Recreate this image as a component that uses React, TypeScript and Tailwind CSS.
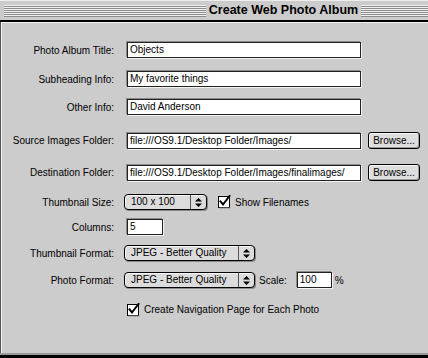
import React from "react";

function Field({ value, className }: { value: string; className: string }) {
  return (
    <div
      className={`h-[16px] overflow-hidden whitespace-nowrap border border-[#222] bg-white pl-[2px] text-[10px] leading-[14px] text-black shadow-[-1px_-1px_0_#8a8a8a,1px_1px_0_#f4f4f4] ${className}`}
    >
      {value}
    </div>
  );
}

function Arrows() {
  return (
    <svg width="7" height="9" viewBox="0 0 7 9">
      <path d="M3.5 0 L7 3.5 L0 3.5 Z" fill="#000" />
      <path d="M0 5.5 L7 5.5 L3.5 9 Z" fill="#000" />
    </svg>
  );
}

function Popup({ value, className }: { value: string; className: string }) {
  return (
    <div
      className={`flex h-[16px] items-stretch rounded-[4px] border border-black bg-[#dcdcdc] shadow-[1px_1px_0_#8a8a8a,inset_1px_1px_0_#f6f6f6] ${className}`}
    >
      <div className="flex-1 whitespace-nowrap pl-[6px] text-[10px] leading-[14px] text-black">
        {value}
      </div>
      <div className="w-px bg-[#555]" />
      <div className="flex w-[15px] items-center justify-center">
        <Arrows />
      </div>
    </div>
  );
}

function Checkbox() {
  return (
    <svg width="14" height="14" viewBox="0 0 14 14" className="shrink-0">
      <rect x="0.5" y="1.5" width="11" height="11" fill="#fff" stroke="#000" />
      <rect x="1.5" y="12.5" width="11" height="1" fill="#8a8a8a" />
      <path
        d="M2.5 6.5 L5 9.5 L11.5 1"
        fill="none"
        stroke="#000"
        strokeWidth="2"
        strokeLinecap="square"
      />
    </svg>
  );
}

function Browse() {
  return (
    <div className="ml-[7px] flex h-[17px] w-[52px] items-center justify-center rounded-[3px] border border-black bg-[#dedede] text-[10px] text-black shadow-[inset_1px_1px_0_#fafafa,inset_-1px_-1px_0_#999]">
      Browse...
    </div>
  );
}

function Label({ children }: { children: React.ReactNode }) {
  return (
    <div className="w-[113px] shrink-0 whitespace-nowrap text-right text-[10px] text-black">
      {children}
    </div>
  );
}

const stripes =
  "h-[12px] bg-[image:repeating-linear-gradient(to_bottom,#f2f2f2_0px,#f2f2f2_1px,#8c8c8c_1px,#8c8c8c_2px)]";

export default function App() {
  return (
    <div className="flex h-[358px] w-[428px] flex-col overflow-hidden bg-[#cccccc] font-['Liberation_Sans',Arial,sans-serif]">
      <div className="flex h-[20px] shrink-0 items-center border-t border-[#eeeeee] bg-[#cccccc]">
        <div className={`ml-[4px] w-[202px] ${stripes}`} />
        <div className="w-[155px] shrink-0 whitespace-nowrap text-center text-[12.5px] font-bold leading-none text-black">
          Create Web Photo Album
        </div>
        <div className={`flex-1 ${stripes}`} />
      </div>
      <div className="h-[2px] shrink-0 bg-black" />

      <div className="flex flex-1 flex-col border-l border-[#555] shadow-[inset_1px_1px_0_#f2f2f2]">
        <div className="mt-[20px] flex items-center gap-[13px]">
          <Label>Photo Album Title:</Label>
          <Field value="Objects" className="w-[234px]" />
        </div>
        <div className="mt-[13px] flex items-center gap-[13px]">
          <Label>Subheading Info:</Label>
          <Field value="My favorite things" className="w-[234px]" />
        </div>
        <div className="mt-[12px] flex items-center gap-[13px]">
          <Label>Other Info:</Label>
          <Field value="David Anderson" className="w-[234px]" />
        </div>
        <div className="mt-[17px] flex items-center gap-[13px]">
          <Label>Source Images Folder:</Label>
          <div className="flex items-center">
            <Field
              value="file:///OS9.1/Desktop Folder/Images/"
              className="w-[234px]"
            />
            <Browse />
          </div>
        </div>
        <div className="mt-[15px] flex items-center gap-[13px]">
          <Label>Destination Folder:</Label>
          <div className="flex items-center">
            <Field
              value="file:///OS9.1/Desktop Folder/Images/finalimages/"
              className="w-[234px]"
            />
            <Browse />
          </div>
        </div>
        <div className="mt-[13px] flex items-center gap-[10px]">
          <Label>Thumbnail Size:</Label>
          <div className="flex items-center gap-[11px]">
            <Popup value="100 x 100" className="w-[83px]" />
            <div className="flex items-center gap-[3px] text-[10px] text-black">
              <Checkbox />
              <span>Show Filenames</span>
            </div>
          </div>
        </div>
        <div className="mt-[9px] flex items-center gap-[13px]">
          <Label>Columns:</Label>
          <Field value="5" className="w-[36px]" />
        </div>
        <div className="mt-[10px] flex items-center gap-[10px]">
          <Label>Thumbnail Format:</Label>
          <Popup value="JPEG - Better Quality" className="w-[131px]" />
        </div>
        <div className="mt-[11px] flex items-center gap-[10px]">
          <Label>Photo Format:</Label>
          <div className="flex items-center">
            <Popup value="JPEG - Better Quality" className="w-[131px]" />
            <span className="ml-[4px] text-[10px] text-black">Scale:</span>
            <Field value="100" className="ml-[10px] w-[35px]" />
            <span className="ml-[3px] text-[10px] text-black">%</span>
          </div>
        </div>
        <div className="mt-[14px] flex items-center gap-[3px] pl-[126px] text-[10px] text-black">
          <Checkbox />
          <span>Create Navigation Page for Each Photo</span>
        </div>
      </div>

      <div className="h-[2px] shrink-0 bg-[#999]" />
      <div className="h-[3px] shrink-0 bg-black" />
    </div>
  );
}
